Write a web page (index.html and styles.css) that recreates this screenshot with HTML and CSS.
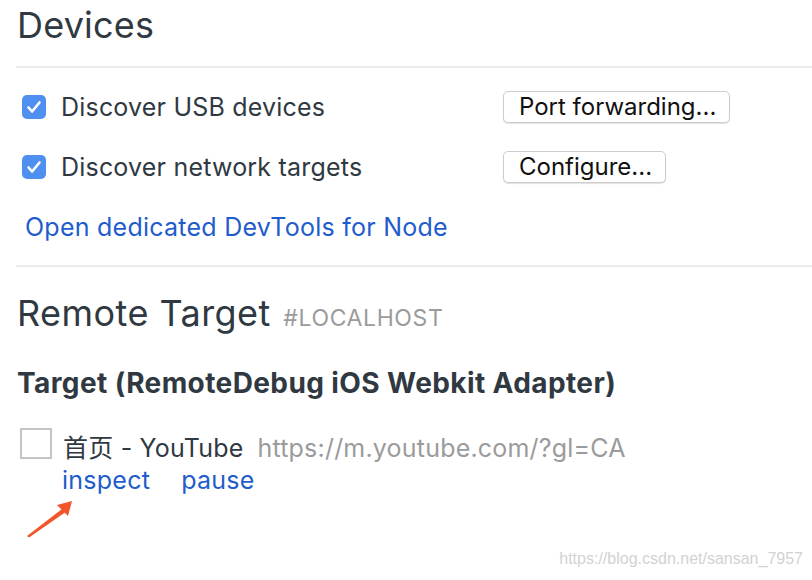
FILE: index.html
```html
<!DOCTYPE html>
<html lang="zh">
<head>
<meta charset="utf-8">
<title>Devices</title>
<link rel="stylesheet" href="styles.css">
</head>
<body>
<main class="page">
  <section class="devices">
    <h1 class="title">Devices</h1>
    <div class="rule"></div>
    <div class="options">
      <div class="option">
        <label class="check">
          <span class="box"><svg viewBox="0 0 24 24" width="24" height="24"><path d="M6.5 12.5l3.6 4 7.4-9" fill="none" stroke="#fff" stroke-width="2.6" stroke-linecap="round" stroke-linejoin="round"/></svg></span>
          <span class="check-text">Discover USB devices</span>
        </label>
        <button class="btn">Port forwarding...</button>
      </div>
      <div class="option">
        <label class="check">
          <span class="box"><svg viewBox="0 0 24 24" width="24" height="24"><path d="M6.5 12.5l3.6 4 7.4-9" fill="none" stroke="#fff" stroke-width="2.6" stroke-linecap="round" stroke-linejoin="round"/></svg></span>
          <span class="check-text">Discover network targets</span>
        </label>
        <button class="btn">Configure...</button>
      </div>
    </div>
    <a class="link node-link" href="#">Open dedicated DevTools for Node</a>
    <div class="rule rule-2"></div>
  </section>

  <section class="remote">
    <h1 class="title remote-title">Remote Target <span class="host">#LOCALHOST</span></h1>
    <h2 class="target-name">Target (RemoteDebug iOS Webkit Adapter)</h2>
    <div class="target">
      <div class="target-row">
        <span class="thumb"></span>
        <span class="page-title">首页 - YouTube</span>
        <span class="url">https://m.youtube.com/?gl=CA</span>
      </div>
      <div class="actions">
        <a class="link" href="#">inspect</a>
        <a class="link" href="#">pause</a>
      </div>
    </div>
  </section>

  <svg class="arrow" viewBox="0 0 52 42" width="52" height="42">
    <polygon points="3,38 5,39.5 41,14.5 38,11" fill="#f2552a"/>
    <polygon points="48,3 33,7 44,18" fill="#f2552a"/>
  </svg>
  <div class="watermark">https://blog.csdn.net/sansan_7957</div>
</main>
</body>
</html>
```

FILE: styles.css
```css
html, body {
  margin: 0;
  padding: 0;
  background: #fff;
}

body {
  font-family: Inter, "Noto Sans CJK SC", sans-serif;
  color: #303942;
  width: 812px;
  height: 580px;
  overflow: hidden;
}

.page {
  position: relative;
  padding: 2px 0 0 16px;
  height: 578px;
}

.title {
  margin: 0 0 0 1px;
  font-size: 36px;
  font-weight: 400;
  line-height: 46px;
  letter-spacing: 0.2px;
}

.rule {
  margin-top: 18px;
  height: 2px;
  background: #ebebeb;
}

.rule-2 {
  margin-top: 22px;
}

.options {
  margin-top: 23px;
  display: flex;
  flex-direction: column;
  gap: 28px;
}

.option {
  display: grid;
  grid-template-columns: 481px auto;
  align-items: center;
  height: 32px;
  margin-left: 6px;
}

.check {
  display: flex;
  align-items: center;
  gap: 15px;
}

.box {
  width: 24px;
  height: 24px;
  border-radius: 5px;
  background: #4f8ff0;
  display: flex;
}

.check-text {
  font-size: 25px;
  line-height: 32px;
  letter-spacing: 0.2px;
}

.btn {
  justify-self: start;
  font-family: Inter, sans-serif;
  font-size: 24px;
  color: #111;
  background: #fff;
  border: 1px solid #cdcdcd;
  border-radius: 5px;
  box-shadow: 0 1px 1px rgba(0, 0, 0, 0.12);
  height: 32px;
  padding: 0 13px 0 15px;
  line-height: 30px;
}

.link {
  color: #1f5ccc;
  text-decoration: none;
  font-size: 25px;
  line-height: 32px;
  letter-spacing: 0.25px;
}

.node-link {
  display: block;
  margin: 28px 0 0 9px;
}

.remote-title {
  margin-top: 23px;
  letter-spacing: 0.45px;
}

.host {
  font-size: 23px;
  line-height: 1;
  color: #9b9b9b;
  margin-left: 2px;
  letter-spacing: 0.6px;
}

.target-name {
  margin: 30px 0 0 1px;
  font-size: 28px;
  font-weight: 700;
  line-height: 34px;
  letter-spacing: 0.4px;
  color: #303942;
}

.target {
  margin-top: 28px;
}

.target-row {
  display: flex;
  align-items: flex-start;
  margin-left: 4px;
}

.thumb {
  width: 28px;
  height: 27px;
  border: 2px solid #c4c4c4;
  margin-right: 11px;
}

.page-title,
.url {
  font-size: 25px;
  line-height: 32px;
  padding-top: 4px;
  letter-spacing: 0.2px;
}

.url {
  color: #9b9b9b;
  margin-left: 14px;
  letter-spacing: 0.2px;
}

.actions {
  display: flex;
  gap: 31px;
  margin-left: 46px;
}

.arrow {
  position: absolute;
  left: 24px;
  top: 498px;
}

.watermark {
  position: absolute;
  right: 9px;
  top: 550px;
  font-family: "Liberation Sans", sans-serif;
  font-size: 16px;
  color: #d2d2d2;
}
```
